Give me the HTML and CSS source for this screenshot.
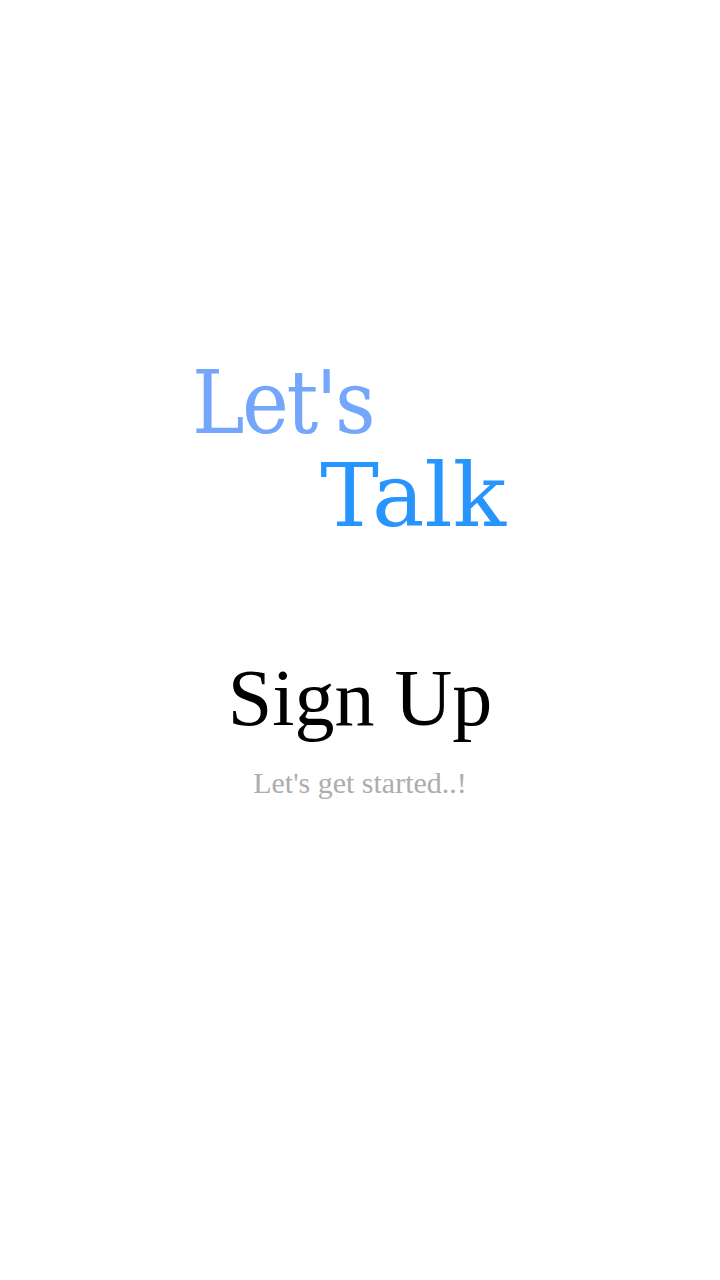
FILE: index.html
```html
<!DOCTYPE html>
<html>
<head>
<meta charset="utf-8">
<link rel="stylesheet" href="styles.css">
</head>
<body>
<main class="screen">
  <div class="logo">
    <div class="logo-lets">Let's</div>
    <div class="logo-talk">Talk</div>
  </div>
  <h1 class="title">Sign Up</h1>
  <p class="subtitle">Let's get started..!</p>
</main>
</body>
</html>
```
FILE: styles.css
```css
html, body {
  margin: 0;
  padding: 0;
  background: #ffffff;
}
.screen {
  width: 720px;
  height: 1280px;
  display: flex;
  flex-direction: column;
  align-items: center;
}
.logo {
  margin: 356px 22px 0 0;
  width: 314px;
  display: flex;
  flex-direction: column;
  font-family: "DejaVu Serif", serif;
  font-size: 88px;
  line-height: 93px;
}
.logo-lets {
  color: #74a7fc;
  align-self: flex-start;
  font-stretch: condensed;
  letter-spacing: -2.5px;
}
.logo-talk {
  color: #2894fd;
  align-self: flex-end;
  font-stretch: normal;
}
.title {
  margin: 110px 0 0 0;
  font-family: "Liberation Serif", serif;
  font-weight: normal;
  font-size: 80px;
  line-height: 92px;
  color: #000;
}
.subtitle {
  margin: 22px 0 0 0;
  font-family: "Liberation Serif", serif;
  font-size: 30px;
  line-height: 34px;
  color: #adadad;
}
```
